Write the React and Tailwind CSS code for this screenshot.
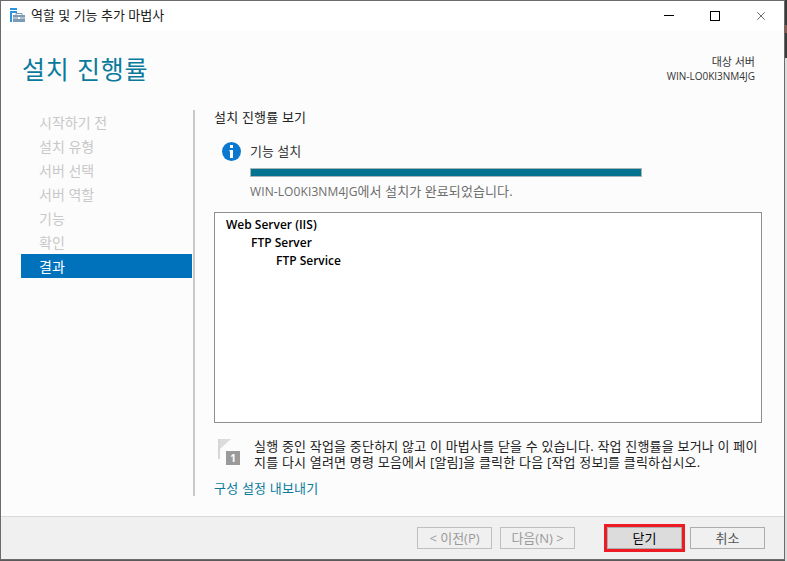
import { X } from "lucide-react";

const font = { fontFamily: '"Open Sans", "Noto Sans CJK KR", sans-serif' };

const steps = ["시작하기 전", "설치 유형", "서버 선택", "서버 역할", "기능", "확인"];

function AppIcon() {
  return (
    <svg width="15" height="14" viewBox="0 0 15 14">
      <path d="M0 0h7v2H0zM0 3h7v2H2v9H0z" fill="#2b95e0" />
      <path d="M3 7h12v7H3z" fill="#7b9cb4" />
      <path d="M6 7V5.500h6V7" fill="none" stroke="#7b9cb4" strokeWidth="1" />
      <path d="M3 10h12" stroke="#dfe8ee" strokeWidth="1" />
      <path d="M8 9h2v2H8z" fill="#fff" />
    </svg>
  );
}

function FlagIcon() {
  return (
    <div className="relative w-[24px] h-[26px]">
      <svg width="14" height="20" viewBox="0 0 14 20" className="absolute left-0 top-0">
        <path d="M0 0h2v20H0z" fill="#d6d6d6" />
        <path d="M2 0h11L2 10z" fill="#dcdcdc" />
      </svg>
      <div className="absolute left-[8px] top-[12px] w-[14px] h-[14px] bg-[#9a9a9a] text-white text-[10px] leading-[14px] text-center font-bold">
        1
      </div>
    </div>
  );
}

function FooterButton({ children, disabled, className = "" }) {
  return (
    <button
      className={`h-[22px] w-[75px] border text-[13px] leading-none ${
        disabled ? "border-[#bfbfbf] text-[#9a9a9a]" : "border-[#adadad] text-[#555]"
      } ${className}`}
    >
      {children}
    </button>
  );
}

export default function App() {
  return (
    <div className="w-[787px] h-[561px] flex overflow-hidden bg-[#5a5a5a]" style={font}>
      <div className="w-[785px] h-[560px] flex flex-col border border-[#6b6b6b] bg-[#fcfcfc] text-[13px] text-[#1a1a1a]">
        {/* title bar */}
        <div className="h-[30px] shrink-0 bg-white flex items-center">
          <div className="ml-[9px] -mt-[2px]">
            <AppIcon />
          </div>
          <span className="ml-[6px] text-[13px]">역할 및 기능 추가 마법사</span>
          <div className="ml-auto flex self-start">
            <div className="w-[46px] h-[29px] flex items-center justify-center">
              <div className="w-[10px] h-px bg-black"></div>
            </div>
            <div className="w-[46px] h-[29px] flex items-center justify-center">
              <div className="w-[10px] h-[10px] border border-black"></div>
            </div>
            <div className="w-[46px] h-[29px] flex items-center justify-center">
              <X size={14} strokeWidth={1} color="#000" />
            </div>
          </div>
        </div>

        {/* header */}
        <div className="h-[79px] shrink-0 flex justify-between pl-[21px] pr-[29px]">
          <h1 className="text-[25px] leading-[32px] mt-[22px] text-[#0a7a9c] font-normal tracking-[0.8px]">설치 진행률</h1>
          <div className="text-right leading-[14px] mt-[24px] text-[#333]">
            <div className="text-[11px]">대상 서버</div>
            <div className="text-[10px]">WIN-LO0KI3NM4JG</div>
          </div>
        </div>

        {/* body */}
        <div className="flex-1 flex min-h-0 pb-[20px]">
          <div className="w-[192px] shrink-0 pl-[20px]">
            {steps.map((s) => (
              <div key={s} className="h-[24px] pl-[18px] text-[14px] leading-[26px] text-[#c8c8c8]">
                {s}
              </div>
            ))}
            <div className="h-[24px] w-[171px] pl-[18px] text-[14px] leading-[26px] bg-[#0072bc] text-white">결과</div>
          </div>
          <div className="w-[2px] shrink-0 bg-[#c9c9c9]"></div>
          <div className="flex-1 min-w-0 pl-[19px] pr-[22px] flex flex-col">
            <div className="h-[16px] leading-[14px] text-[#222] tracking-[0.2px]">설치 진행률 보기</div>

            <div className="flex mt-[16px] ml-[8px]">
              <div className="w-[19px] h-[19px] rounded-full bg-[#0b78d0] flex items-center justify-center">
                <svg width="5" height="13" viewBox="0 0 5 13">
                  <path d="M1 0h3v3H1zM0.500 5H4v8H1V6.500H0.500z" fill="#fff" />
                </svg>
              </div>
              <div className="ml-[9px] mt-[1px] flex flex-col">
                <div className="h-[16px] leading-[16px] text-[#333]">기능 설치</div>
                <div className="w-[392px] h-[9px] mt-[9px] bg-[#02728f] border border-[#a9b5bb]"></div>
                <div className="mt-[6px] leading-[16px] text-[#6d6d6d] tracking-[0.1px]">
                  <span className="text-[12px]">WIN-LO0KI3NM4JG</span>에서 설치가 완료되었습니다.
                </div>
              </div>
            </div>

            <div className="mt-[12px] h-[214px] border border-[#8f8f8f] bg-white pt-[3px] pl-[11px] font-semibold text-[12px] leading-[18px] text-black">
              <div>Web Server (IIS)</div>
              <div className="pl-[25px]">FTP Server</div>
              <div className="pl-[50px]">FTP Service</div>
            </div>

            <div className="flex mt-[15px] ml-[4px]">
              <div className="mt-[1px]">
                <FlagIcon />
              </div>
              <p className="ml-[12px] w-[510px] leading-[16px] text-[#222] tracking-[0.2px]">
                실행 중인 작업을 중단하지 않고 이 마법사를 닫을 수 있습니다. 작업 진행률을 보거나 이 페이
                <br />
                지를 다시 열려면 명령 모음에서 [알림]을 클릭한 다음 [작업 정보]를 클릭하십시오.
              </p>
            </div>
            <div className="mt-[10px] leading-[16px] text-[#0a7a9c] tracking-[0.2px]">구성 설정 내보내기</div>
          </div>
        </div>

        {/* footer */}
        <div className="h-[43px] shrink-0 bg-[#f0f0f0] border-t border-[#d9d9d9] flex items-center pl-[416px]">
          <FooterButton disabled>&lt; 이전(P)</FooterButton>
          <FooterButton disabled className="ml-[8px]">다음(N) &gt;</FooterButton>
          <FooterButton className="ml-[32px] !bg-[#dcdcdc] !text-black outline-[3px] outline-[#ed1c24]">닫기</FooterButton>
          <FooterButton className="ml-[8px]">취소</FooterButton>
        </div>
      </div>
      <div className="flex-1 flex flex-col">
        <div className="h-[25px] bg-[#3a3a3a]"></div>
        <div className="h-[8px] bg-[#8a5a50]"></div>
        <div className="h-[25px] bg-[#3a3a3a]"></div>
        <div className="flex-1 bg-[#dcdcdc]"></div>
      </div>
    </div>
  );
}
